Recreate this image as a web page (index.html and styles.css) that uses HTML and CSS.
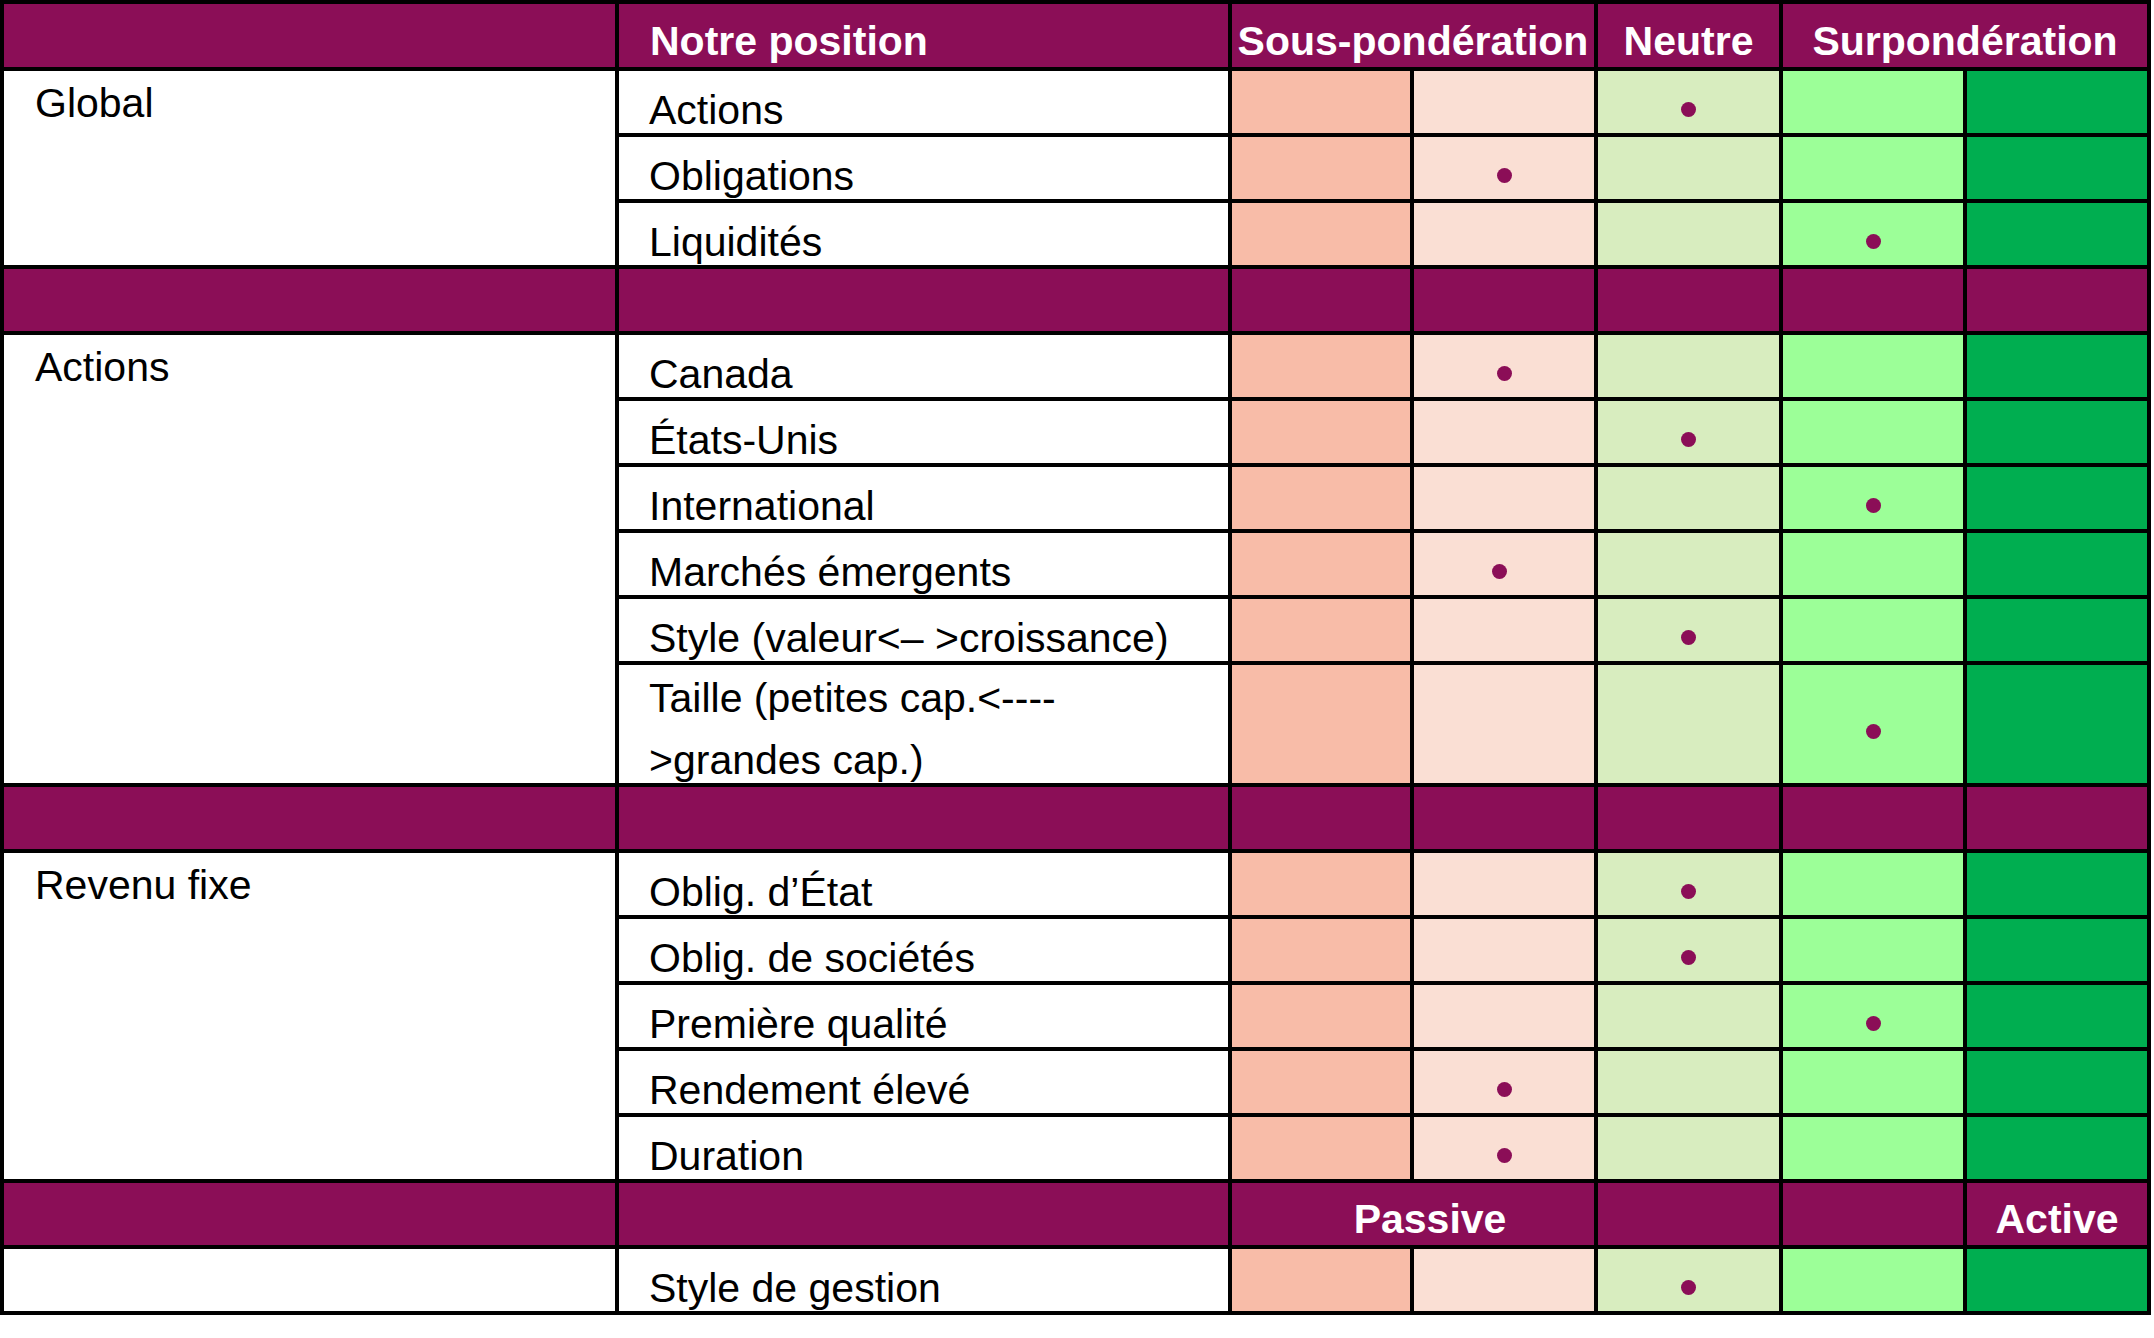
FILE: index.html
```html
<!DOCTYPE html>
<html lang="fr">
<head>
<meta charset="utf-8">
<title>Notre position</title>
<link rel="stylesheet" href="styles.css">
</head>
<body>
<div class="grid">
  <!-- header -->
  <div class="hd top"></div>
  <div class="hd top left">Notre position</div>
  <div class="hd top span2">Sous-pondération</div>
  <div class="hd top">Neutre</div>
  <div class="hd top span2">Surpondération</div>

  <!-- Global -->
  <div class="lbl rows3">Global</div>
  <div class="item"><span>Actions</span></div>
  <div class="c c1"></div><div class="c c2"></div><div class="c c3"><i class="dot"></i></div><div class="c c4"></div><div class="c c5"></div>
  <div class="item"><span>Obligations</span></div>
  <div class="c c1"></div><div class="c c2"><i class="dot"></i></div><div class="c c3"></div><div class="c c4"></div><div class="c c5"></div>
  <div class="item"><span>Liquidités</span></div>
  <div class="c c1"></div><div class="c c2"></div><div class="c c3"></div><div class="c c4"><i class="dot"></i></div><div class="c c5"></div>

  <div class="hd"></div><div class="hd"></div><div class="hd"></div><div class="hd"></div><div class="hd"></div><div class="hd"></div><div class="hd"></div>

  <!-- Actions -->
  <div class="lbl rows6">Actions</div>
  <div class="item"><span>Canada</span></div>
  <div class="c c1"></div><div class="c c2"><i class="dot"></i></div><div class="c c3"></div><div class="c c4"></div><div class="c c5"></div>
  <div class="item"><span>États-Unis</span></div>
  <div class="c c1"></div><div class="c c2"></div><div class="c c3"><i class="dot"></i></div><div class="c c4"></div><div class="c c5"></div>
  <div class="item"><span>International</span></div>
  <div class="c c1"></div><div class="c c2"></div><div class="c c3"></div><div class="c c4"><i class="dot"></i></div><div class="c c5"></div>
  <div class="item"><span>Marchés émergents</span></div>
  <div class="c c1"></div><div class="c c2"><i class="dot nudge"></i></div><div class="c c3"></div><div class="c c4"></div><div class="c c5"></div>
  <div class="item"><span>Style (valeur&lt;– &gt;croissance)</span></div>
  <div class="c c1"></div><div class="c c2"></div><div class="c c3"><i class="dot"></i></div><div class="c c4"></div><div class="c c5"></div>
  <div class="item"><span>Taille (petites cap.&lt;----<br>&gt;grandes cap.)</span></div>
  <div class="c c1"></div><div class="c c2"></div><div class="c c3"></div><div class="c c4"><i class="dot"></i></div><div class="c c5"></div>

  <div class="hd"></div><div class="hd"></div><div class="hd"></div><div class="hd"></div><div class="hd"></div><div class="hd"></div><div class="hd"></div>

  <!-- Revenu fixe -->
  <div class="lbl rows5">Revenu fixe</div>
  <div class="item"><span>Oblig. d’État</span></div>
  <div class="c c1"></div><div class="c c2"></div><div class="c c3"><i class="dot"></i></div><div class="c c4"></div><div class="c c5"></div>
  <div class="item"><span>Oblig. de sociétés</span></div>
  <div class="c c1"></div><div class="c c2"></div><div class="c c3"><i class="dot"></i></div><div class="c c4"></div><div class="c c5"></div>
  <div class="item"><span>Première qualité</span></div>
  <div class="c c1"></div><div class="c c2"></div><div class="c c3"></div><div class="c c4"><i class="dot"></i></div><div class="c c5"></div>
  <div class="item"><span>Rendement élevé</span></div>
  <div class="c c1"></div><div class="c c2"><i class="dot"></i></div><div class="c c3"></div><div class="c c4"></div><div class="c c5"></div>
  <div class="item"><span>Duration</span></div>
  <div class="c c1"></div><div class="c c2"><i class="dot"></i></div><div class="c c3"></div><div class="c c4"></div><div class="c c5"></div>

  <!-- Style de gestion -->
  <div class="hd"></div><div class="hd"></div>
  <div class="hd span2 passive">Passive</div>
  <div class="hd"></div><div class="hd"></div>
  <div class="hd">Active</div>

  <div class="lbl"></div>
  <div class="item"><span>Style de gestion</span></div>
  <div class="c c1"></div><div class="c c2"></div><div class="c c3"><i class="dot"></i></div><div class="c c4"></div><div class="c c5"></div>
</div>
</body>
</html>
```

FILE: styles.css
```css
html, body {
  margin: 0;
  padding: 0;
  background: #ffffff;
}

.grid {
  display: grid;
  width: 2151px;
  box-sizing: border-box;
  padding: 4px;
  gap: 4px;
  background: #000000;
  grid-template-columns: 611px 609px 178px 180px 181px 180px 180px;
  grid-template-rows: 63px repeat(9, 62px) 118px repeat(8, 62px);
  font-family: "Liberation Sans", Arial, sans-serif;
  font-size: 41px;
  color: #000000;
}

.hd {
  background: #8b0e57;
  color: #ffffff;
  font-weight: bold;
  line-height: 62px;
  padding-top: 5px;
  text-align: center;
  white-space: nowrap;
  overflow: visible;
}

.hd.top {
  padding-top: 6px;
}

.hd.left {
  text-align: left;
  padding-left: 31px;
}

.span2 {
  grid-column: span 2;
}

.passive {
  padding-left: 34px;
}

.lbl {
  background: #ffffff;
  line-height: 62px;
  padding-top: 1px;
  padding-left: 31px;
}

.rows3 { grid-row: span 3; }
.rows5 { grid-row: span 5; }
.rows6 { grid-row: span 6; }

.item {
  background: #ffffff;
  display: flex;
  align-items: flex-end;
  padding-left: 30px;
}

.item span {
  display: block;
  line-height: 62px;
  margin-bottom: -8px;
  white-space: nowrap;
}

.c {
  display: flex;
  align-items: center;
  justify-content: center;
}

.c1 { background: #f8bca8; }
.c2 { background: #fadfd4; }
.c3 { background: #d8edbf; }
.c4 { background: #9cff98; }
.c5 { background: #00ae50; }

.dot {
  display: block;
  width: 15px;
  height: 15px;
  border-radius: 50%;
  background: #8b0e57;
  margin-top: 15px;
}

.dot.nudge {
  margin-right: 10px;
}
```
